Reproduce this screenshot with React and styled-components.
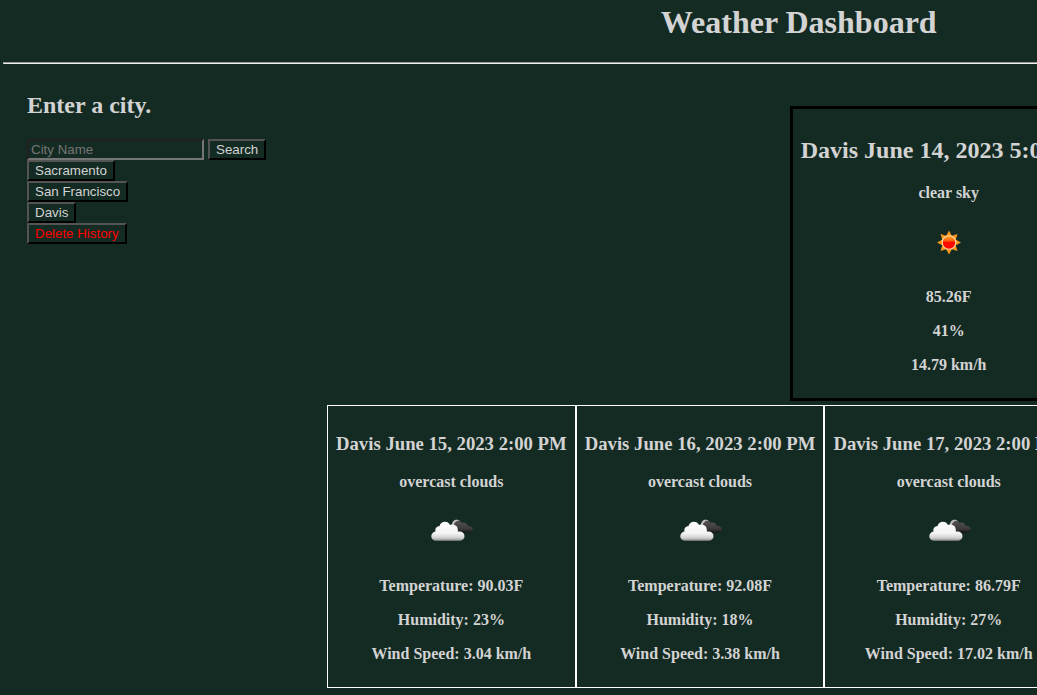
import React from "react";
import styled, { createGlobalStyle } from "styled-components";

const GlobalStyle = createGlobalStyle`
  html {
    background: #142b23;
    overflow: hidden;
  }
  body {
    margin: 0;
    color: lightgray;
    font-family: "Liberation Serif", "Times New Roman", serif;
    font-size: 16px;
    line-height: 18px;
  }
`;

const Page = styled.div`
  width: max-content;
  min-width: 100%;
  box-sizing: border-box;
  padding: 4px 3px;
`;

const Title = styled.h1`
  margin: 0 0 21px;
  font-size: 32px;
  line-height: 37px;
  text-align: center;
`;

const Divider = styled.hr`
  margin: 0;
`;

const Columns = styled.div`
  display: flex;
  padding: 8px 24px;
`;

const Sidebar = styled.aside`
  flex: 0 0 300px;
`;

const Heading = styled.h2`
  margin: 20px 0;
  font-size: 24px;
  line-height: 27px;
`;

const SearchForm = styled.form`
  display: flex;
  gap: 4px;
`;

const CityInput = styled.input`
  box-sizing: border-box;
  width: 177px;
  height: 21px;
  margin: 0;
  padding: 1px 2px;
  border: 2px inset #767676;
  background: transparent;
  color: lightgray;
  font-family: "Liberation Sans", Arial, sans-serif;

  &::placeholder {
    color: #757575;
  }
`;

const Button = styled.button`
  height: 21px;
  margin: 0;
  padding: 1px 6px;
  border: 2px outset #000;
  background: transparent;
  color: ${(p) => (p.$danger ? "red" : "lightgray")};
  font-family: "Liberation Sans", Arial, sans-serif;
`;

const History = styled.div`
  display: flex;
  flex-direction: column;
  align-items: flex-start;
`;

const Main = styled.main`
  display: flex;
  flex: 1;
  flex-direction: column;
  align-items: center;
  gap: 4px;
  padding-top: 34px;
`;

const Card = styled.section`
  padding: 8px;
  border: ${(p) => (p.$current ? "3px solid #000" : "1px solid #fff")};
  font-weight: bold;
  text-align: center;
`;

const Forecast = styled.div`
  display: flex;
`;

const DayHeading = styled.h3`
  margin: 19px 0;
  line-height: 21px;
`;

const Line = styled.p`
  margin: 16px 0;
`;

const IconLine = styled.div`
  display: flex;
  justify-content: center;
  padding-bottom: 4px;
`;

function SunIcon() {
  return (
    <svg width="50" height="50" viewBox="0 0 50 50" role="img" aria-label="clear sky">
      <defs>
        <linearGradient id="sunCore" x1="0" y1="0" x2="0" y2="1">
          <stop offset="0" stopColor="#ffb01c" />
          <stop offset="0.38" stopColor="#ff5a10" />
          <stop offset="0.5" stopColor="#ff0a00" />
          <stop offset="1" stopColor="#ff0800" />
        </linearGradient>
      </defs>
      <g fill="#f8961a">
        {[0, 45, 90, 135, 180, 225, 270, 315].map((a) => (
          <path key={a} d="M21.8 18.5L25 12.5L28.2 18.5Z" transform={`rotate(${a} 25 24.5)`} />
        ))}
      </g>
      <circle cx="25" cy="24.5" r="6.8" fill="url(#sunCore)" stroke="#ffd9a8" strokeWidth="1.1" />
    </svg>
  );
}

function CloudIcon() {
  return (
    <svg width="50" height="50" viewBox="0 0 50 50" role="img" aria-label="overcast clouds">
      <defs>
        <linearGradient id="cloudFront" x1="0" y1="0" x2="0" y2="1">
          <stop offset="0" stopColor="#fff" />
          <stop offset="0.6" stopColor="#f4f4f4" />
          <stop offset="0.85" stopColor="#d0d0d0" />
          <stop offset="1" stopColor="#8a8a8a" />
        </linearGradient>
        <linearGradient id="cloudBack" x1="0" y1="0" x2="0" y2="1">
          <stop offset="0" stopColor="#5a5658" />
          <stop offset="0.7" stopColor="#3c3a3c" />
          <stop offset="1" stopColor="#151515" />
        </linearGradient>
      </defs>
      <path
        d="M26 18C26 14.6 28.2 12.7 31 12.7C33.2 12.7 34.8 14 35.4 15.9C38 15 41 16.2 41.6 18.8C44.6 18.8 46.8 20.2 46.8 22.4C46.8 24.6 45 25.7 42.6 25.7H31Z"
        fill="url(#cloudBack)"
      />
      <path d="M26 18C26 14.6 28.2 12.7 31 12.7C32.2 12.7 33 13 33.7 13.5C30.5 13.6 28.6 15.2 27.6 18Z" fill="#bdbdbd" />
      <path
        d="M10.5 33.8C7.4 33.8 5.3 32 5.3 29.3C5.3 26.8 7 25 9.5 24.5C8.8 21.4 10.7 19 13.4 19.2C14.2 16.4 16.3 14.8 18.8 14.8C21.3 14.8 23.1 16 24 18.1C27.8 16.5 32 19 31.8 23.2C32 23.7 32 24.2 31.9 24.7C35.8 24.1 38.5 26.2 38.5 29.3C38.5 32 36.4 33.8 33.2 33.8Z"
        fill="url(#cloudFront)"
      />
    </svg>
  );
}

const cities = ["Sacramento", "San Francisco", "Davis"];

const days = [
  { date: "June 15, 2023", temp: "90.03", humidity: 23, wind: "3.04" },
  { date: "June 16, 2023", temp: "92.08", humidity: 18, wind: "3.38" },
  { date: "June 17, 2023", temp: "86.79", humidity: 27, wind: "17.02" },
  { date: "June 18, 2023", temp: "80.10", humidity: 31, wind: "15.20" },
  { date: "June 19, 2023", temp: "75.40", humidity: 38, wind: "14.60" },
];

export default function App() {
  return (
    <>
      <GlobalStyle />
      <Page>
        <header>
          <Title>Weather Dashboard</Title>
          <Divider />
        </header>
        <Columns>
          <Sidebar>
            <Heading>Enter a city.</Heading>
            <SearchForm onSubmit={(e) => e.preventDefault()}>
              <CityInput type="text" aria-label="City Name" placeholder="City Name" />
              <Button type="submit">Search</Button>
            </SearchForm>
            <History>
              {cities.map((city) => (
                <Button key={city} type="button">{city}</Button>
              ))}
              <Button type="button" $danger>Delete History</Button>
            </History>
          </Sidebar>
          <Main>
            <Card $current>
              <Heading>Davis June 14, 2023 5:00 PM</Heading>
              <Line>clear sky</Line>
              <IconLine><SunIcon /></IconLine>
              <Line>85.26F</Line>
              <Line>41%</Line>
              <Line>14.79 km/h</Line>
            </Card>
            <Forecast>
              {days.map((day) => (
                <Card key={day.date}>
                  <DayHeading>Davis {day.date} 2:00 PM</DayHeading>
                  <Line>overcast clouds</Line>
                  <IconLine><CloudIcon /></IconLine>
                  <Line>Temperature: {day.temp}F</Line>
                  <Line>Humidity: {day.humidity}%</Line>
                  <Line>Wind Speed: {day.wind} km/h</Line>
                </Card>
              ))}
            </Forecast>
          </Main>
        </Columns>
      </Page>
    </>
  );
}
